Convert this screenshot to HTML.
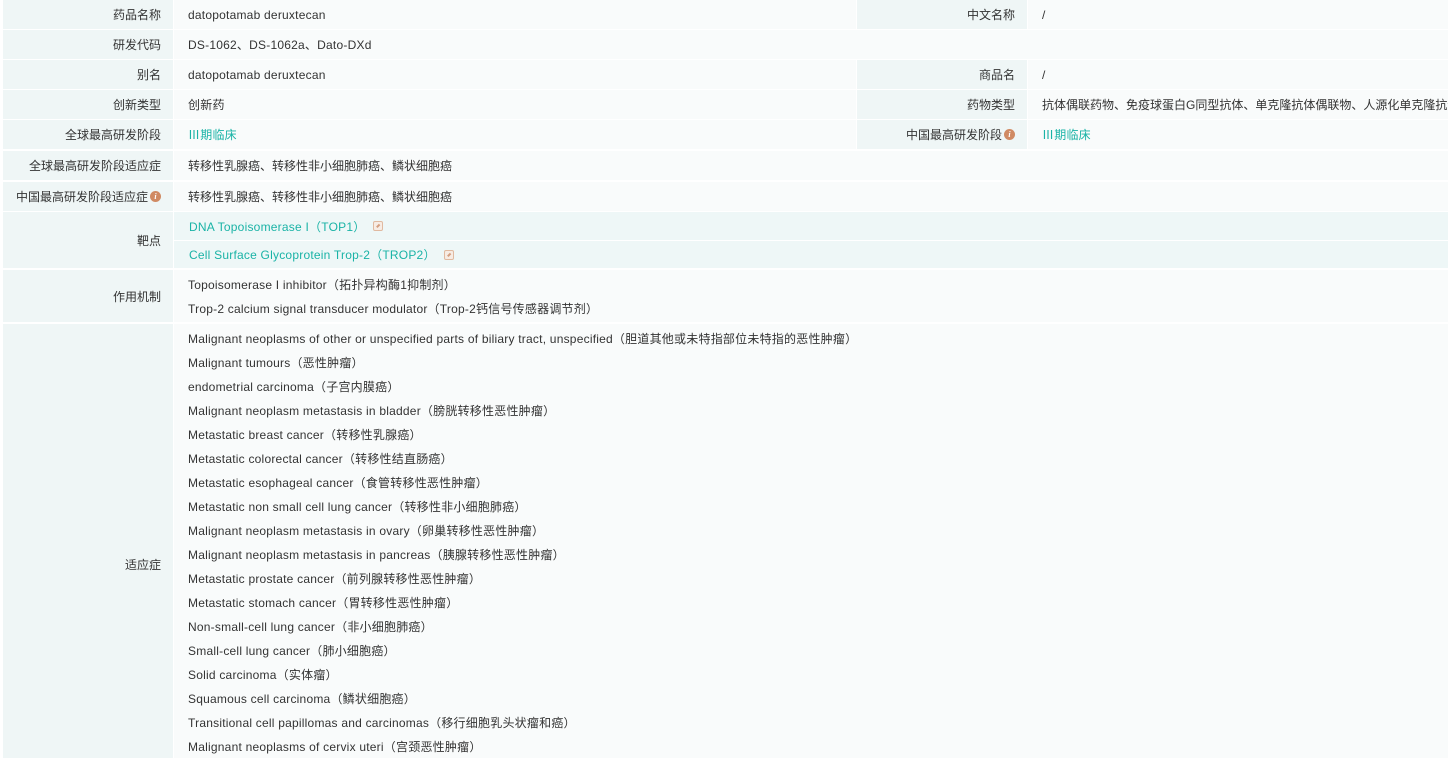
<!DOCTYPE html>
<html><head><meta charset="utf-8"><style>
*{margin:0;padding:0;box-sizing:border-box}
html,body{width:1448px;height:758px;overflow:hidden}
body{background:#fff;font-family:"Liberation Sans","Noto Sans CJK SC",sans-serif;font-size:12px;color:#333;position:relative}
.b{position:absolute}
.l{background:#eff6f6;text-align:right;padding-right:12px;display:flex;align-items:center;justify-content:flex-end}
.v{background:#f9fbfb;padding-left:14px;display:flex;align-items:center;letter-spacing:0.22px}
.t{color:#1ab3a6}
.tg{background:#eef7f7}
.i{display:inline-block;width:11px;height:11px;border-radius:50%;background:#d08a63;color:#fff;font-size:8px;line-height:11px;text-align:center;font-style:italic;font-weight:bold;margin-left:2px;font-family:"Liberation Serif",serif}
.lk{display:inline-block;width:10px;height:10px;border:1.5px solid #e0b9a0;border-radius:2px;margin-left:8px;vertical-align:-1px;position:relative;background:#f7ece4}
.lk:after{content:"";position:absolute;left:2px;top:3px;width:4px;height:1.5px;background:#d49f80;transform:rotate(-45deg)}
.ind{position:absolute;left:188px;line-height:24px;letter-spacing:0.22px;white-space:nowrap}
</style></head><body>
<div class="b l" style="left:3px;top:0;width:170px;height:29px">药品名称</div>
<div class="b v" style="left:174px;top:0;width:682px;height:29px">datopotamab deruxtecan</div>
<div class="b l" style="left:857px;top:0;width:170px;height:29px">中文名称</div>
<div class="b v" style="left:1028px;top:0;width:420px;height:29px">/</div>
<div class="b l" style="left:3px;top:30px;width:170px;height:29px">研发代码</div>
<div class="b v" style="left:174px;top:30px;width:1274px;height:29px">DS-1062、DS-1062a、Dato-DXd</div>
<div class="b l" style="left:3px;top:60px;width:170px;height:29px">别名</div>
<div class="b v" style="left:174px;top:60px;width:682px;height:29px">datopotamab deruxtecan</div>
<div class="b l" style="left:857px;top:60px;width:170px;height:29px">商品名</div>
<div class="b v" style="left:1028px;top:60px;width:420px;height:29px">/</div>
<div class="b l" style="left:3px;top:90px;width:170px;height:29px">创新类型</div>
<div class="b v" style="left:174px;top:90px;width:682px;height:29px">创新药</div>
<div class="b l" style="left:857px;top:90px;width:170px;height:29px">药物类型</div>
<div class="b v" style="left:1028px;top:90px;width:420px;height:29px;white-space:nowrap;overflow:hidden;letter-spacing:0">抗体偶联药物、免疫球蛋白G同型抗体、单克隆抗体偶联物、人源化单克隆抗体</div>
<div class="b l" style="left:3px;top:120px;width:170px;height:29px">全球最高研发阶段</div>
<div class="b v t" style="left:174px;top:120px;width:682px;height:29px">Ⅲ期临床</div>
<div class="b l" style="left:857px;top:120px;width:170px;height:29px">中国最高研发阶段<span class="i">i</span></div>
<div class="b v t" style="left:1028px;top:120px;width:420px;height:29px">Ⅲ期临床</div>
<div class="b l" style="left:3px;top:151px;width:170px;height:29px">全球最高研发阶段适应症</div>
<div class="b v" style="left:174px;top:151px;width:1274px;height:29px;letter-spacing:0">转移性乳腺癌、转移性非小细胞肺癌、鳞状细胞癌</div>
<div class="b l" style="left:3px;top:182px;width:170px;height:29px">中国最高研发阶段适应症<span class="i">i</span></div>
<div class="b v" style="left:174px;top:182px;width:1274px;height:29px;letter-spacing:0">转移性乳腺癌、转移性非小细胞肺癌、鳞状细胞癌</div>
<div class="b l" style="left:3px;top:212px;width:170px;height:56px">靶点</div>
<div class="b v tg t" style="left:174px;top:212px;width:1274px;height:28px;padding-left:15px">DNA Topoisomerase I（TOP1）<span class="lk"></span></div>
<div class="b v tg t" style="left:174px;top:241px;width:1274px;height:27px;padding-left:15px">Cell Surface Glycoprotein Trop-2（TROP2）<span class="lk"></span></div>
<div class="b l" style="left:3px;top:270px;width:170px;height:52px">作用机制</div>
<div class="b v" style="left:174px;top:270px;width:1274px;height:52px"></div>
<div class="ind" style="top:273px">Topoisomerase I inhibitor（拓扑异构酶1抑制剂）</div>
<div class="ind" style="top:297px">Trop-2 calcium signal transducer modulator（Trop-2钙信号传感器调节剂）</div>
<div class="b l" style="left:3px;top:324px;width:170px;height:434px;align-items:flex-start;padding-top:232px">适应症</div>
<div class="b v" style="left:174px;top:324px;width:1274px;height:434px"></div>
<div class="ind" style="top:327px">Malignant neoplasms of other or unspecified parts of biliary tract, unspecified（胆道其他或未特指部位未特指的恶性肿瘤）</div>
<div class="ind" style="top:351px">Malignant tumours（恶性肿瘤）</div>
<div class="ind" style="top:375px">endometrial carcinoma（子宫内膜癌）</div>
<div class="ind" style="top:399px">Malignant neoplasm metastasis in bladder（膀胱转移性恶性肿瘤）</div>
<div class="ind" style="top:423px">Metastatic breast cancer（转移性乳腺癌）</div>
<div class="ind" style="top:447px">Metastatic colorectal cancer（转移性结直肠癌）</div>
<div class="ind" style="top:471px">Metastatic esophageal cancer（食管转移性恶性肿瘤）</div>
<div class="ind" style="top:495px">Metastatic non small cell lung cancer（转移性非小细胞肺癌）</div>
<div class="ind" style="top:519px">Malignant neoplasm metastasis in ovary（卵巢转移性恶性肿瘤）</div>
<div class="ind" style="top:543px">Malignant neoplasm metastasis in pancreas（胰腺转移性恶性肿瘤）</div>
<div class="ind" style="top:567px">Metastatic prostate cancer（前列腺转移性恶性肿瘤）</div>
<div class="ind" style="top:591px">Metastatic stomach cancer（胃转移性恶性肿瘤）</div>
<div class="ind" style="top:615px">Non-small-cell lung cancer（非小细胞肺癌）</div>
<div class="ind" style="top:639px">Small-cell lung cancer（肺小细胞癌）</div>
<div class="ind" style="top:663px">Solid carcinoma（实体瘤）</div>
<div class="ind" style="top:687px">Squamous cell carcinoma（鳞状细胞癌）</div>
<div class="ind" style="top:711px">Transitional cell papillomas and carcinomas（移行细胞乳头状瘤和癌）</div>
<div class="ind" style="top:735px">Malignant neoplasms of cervix uteri（宫颈恶性肿瘤）</div>
</body></html>
